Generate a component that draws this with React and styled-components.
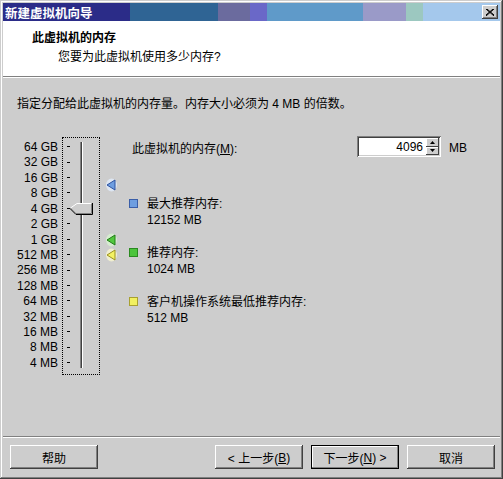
import React from 'react'
import styled, { createGlobalStyle } from 'styled-components'

const face = '#cdcdcd'
const shadow = '#808080'
const dark = '#404040'

const Global = createGlobalStyle`
  html, body { margin: 0; padding: 0; background: ${face}; }
  body {
    font-family: "Liberation Sans", "Noto Sans CJK SC", sans-serif;
    font-size: 12px;
    color: #000;
  }
  * { box-sizing: border-box; }
`

const Window = styled.div`
  width: 503px;
  height: 479px;
  padding: 3px;
  display: flex;
  flex-direction: column;
  background: ${face};
  box-shadow: inset -1px -1px ${dark}, inset 1px 1px ${face},
    inset -2px -2px ${shadow}, inset 2px 2px #fff;
`

const TitleBar = styled.div`
  height: 18px;
  display: flex;
  align-items: center;
  justify-content: space-between;
  padding: 0 2px 0 2px;
  background: linear-gradient(90deg,
    #2b2c88 0 127px, #2f6494 127px 215px, #6b6b9e 215px 247px,
    #6a68c8 247px 264px, #5f9ac9 264px 360px, #9a9ac8 360px 403px,
    #9cc8c0 403px 420px, #a4c8ec 420px);
`

const Title = styled.span`
  color: #fff;
  font-weight: bold;
  font-size: 12.5px;
`

const CloseBox = styled.div`
  width: 16px;
  height: 14px;
  background: ${face};
  display: flex;
  align-items: center;
  justify-content: center;
  box-shadow: inset -1px -1px ${dark}, inset 1px 1px #fff,
    inset -2px -2px ${shadow};
`

const Header = styled.div`
  height: 56px;
  background: #fff;
  padding: 10px 0 0 29px;
  border-bottom: 1px solid ${shadow};
`

const Heading = styled.div`
  font-weight: bold;
  line-height: 15px;
`

const Subtitle = styled.div`
  line-height: 15px;
  margin-top: 4px;
  padding-left: 26px;
`

const Rule = styled.div`
  height: 2px;
  border-top: 1px solid ${shadow};
  border-bottom: 1px solid #fff;
`

const HeaderEdge = styled.div`
  height: 1px;
  background: #fff;
`

const Body = styled.div`
  flex: 1;
  padding: 19px 0 0 14px;
`

const Instruction = styled.div`
  line-height: 15px;
`

const Content = styled.div`
  display: flex;
  align-items: flex-start;
  margin-top: 25px;
`

const Scale = styled.div`
  display: flex;
  gap: 4px;
`

const Labels = styled.div`
  width: 41px;
  padding-top: 3px;
  text-align: right;
  white-space: nowrap;
`

const Row = styled.div`
  height: 15.43px;
  line-height: 15.43px;
`

const SliderBox = styled.div`
  position: relative;
  width: 38px;
  height: 238px;
  border: 1px dotted #000;
  padding: 0 0 0 4px;
`

const Ticks = styled.div`
  padding-top: 1px;
`

const Tick = styled.div`
  height: 15.43px;
  display: flex;
  align-items: center;
  &::before {
    content: '';
    width: 3px;
    height: 1px;
    background: #000;
  }
`

const Track = styled.div`
  position: absolute;
  left: 17px;
  top: 4px;
  width: 3px;
  height: 226px;
  border-left: 1px solid ${shadow};
  border-right: 1px solid #fff;
  background: ${dark};
`

const Thumb = styled.svg`
  position: absolute;
  left: 7px;
  width: 23px;
  height: 12px;
`

const Marker = styled.svg`
  position: absolute;
  left: 42px;
  width: 12px;
  height: 14px;
`

const Details = styled.div`
  margin-left: 29px;
  margin-top: -1px;
  display: flex;
  flex-direction: column;
`

const MemoryRow = styled.div`
  display: flex;
  align-items: center;
  height: 21px;
`

const MemoryLabel = styled.span`
  width: 228px;
  padding-left: 3px;
  padding-top: 2px;
`

const Spin = styled.div`
  width: 84px;
  height: 21px;
  background: #fff;
  display: flex;
  align-items: stretch;
  padding: 2px;
  box-shadow: inset 1px 1px ${shadow}, inset -1px -1px #fff,
    inset 2px 2px ${dark}, inset -2px -2px ${face};
`

const SpinValue = styled.span`
  flex: 1;
  text-align: right;
  padding-right: 3px;
  line-height: 18px;
`

const SpinButtons = styled.div`
  width: 13px;
  display: flex;
  flex-direction: column;
`

const SpinButton = styled.div`
  flex: 1;
  background: ${face};
  display: flex;
  align-items: center;
  justify-content: center;
  box-shadow: inset -1px -1px ${dark}, inset 1px 1px #fff;
`

const Unit = styled.span`
  margin-left: 8px;
  padding-top: 2px;
`

const Legend = styled.div`
  display: flex;
  flex-direction: column;
  gap: 18px;
  margin-top: 40px;
`

const LegendItem = styled.div`
  display: flex;
  align-items: flex-start;
`

const Swatch = styled.span`
  width: 9px;
  height: 9px;
  margin: 2px 9px 0 0;
  border: 1px solid ${p => p.$edge};
  background: ${p => p.$fill};
`

const LegendText = styled.div`
  line-height: 15.5px;
`

const Footer = styled.div`
  display: flex;
  align-items: center;
  padding: 7px 5px 7px 7px;
`

const Spacer = styled.div`
  flex: 1;
`

const Button = styled.div`
  width: 88px;
  height: 24px;
  display: flex;
  align-items: center;
  justify-content: center;
  padding-top: 1px;
  margin-left: ${p => p.$gap || 0}px;
  background: ${face};
  box-shadow: ${p => p.$default
    ? `inset 0 0 0 1px #000, inset -2px -2px ${shadow}, inset 2px 2px #fff`
    : `inset -1px -1px ${dark}, inset 1px 1px #fff, inset -2px -2px ${shadow}`};
`

const Key = styled.span`
  text-decoration: underline;
`

const scale = ['64 GB', '32 GB', '16 GB', '8 GB', '4 GB', '2 GB', '1 GB', '512 MB',
  '256 MB', '128 MB', '64 MB', '32 MB', '16 MB', '8 MB', '4 MB']

const step = 15.43
const posOf = mb => 9 + Math.log2(65536 / mb) * step

const markers = [
  { mb: 12152, fill: '#6e9ee0', edge: '#2e52a0', glow: '#dde6f2' },
  { mb: 1024, fill: '#52c83e', edge: '#227a18', glow: '#d6ecd0' },
  { mb: 512, fill: '#f4f262', edge: '#9a9020', glow: '#f0eed0' },
]

const legend = [
  { title: '最大推荐内存:', value: '12152 MB', fill: '#6e9ee0', edge: '#3a5ea8' },
  { title: '推荐内存:', value: '1024 MB', fill: '#4cc43c', edge: '#2a8a20' },
  { title: '客户机操作系统最低推荐内存:', value: '512 MB', fill: '#f2f060', edge: '#a8a030' },
]

const App = () => {
  const value = 4096
  return (
    <>
      <Global />
      <Window>
        <TitleBar>
          <Title>新建虚拟机向导</Title>
          <CloseBox>
            <svg width="8" height="7" viewBox="0 0 8 7">
              <path d="M0 0 L8 7 M1 0 L8 6 M8 0 L0 7 M7 0 L0 6" stroke="#000" strokeWidth="1" />
            </svg>
          </CloseBox>
        </TitleBar>
        <Header>
          <Heading>此虚拟机的内存</Heading>
          <Subtitle>您要为此虚拟机使用多少内存?</Subtitle>
        </Header>
        <HeaderEdge />
        <Body>
          <Instruction>指定分配给此虚拟机的内存量。内存大小必须为 4 MB 的倍数。</Instruction>
          <Content>
            <Scale>
              <Labels>
                {scale.map(s => <Row key={s}>{s}</Row>)}
              </Labels>
              <SliderBox>
                <Ticks>
                  {scale.map(s => <Tick key={s} />)}
                </Ticks>
                <Track />
                <Thumb viewBox="0 0 23 12" style={{ top: posOf(value) - 6 }}>
                  <path d="M7 0.5 H21.5 V10.5 H6 L0.5 5 Z" fill={face} stroke="#fff" />
                  <path d="M21.5 0.5 V10.5 H6 L0.5 5" fill="none" stroke={shadow} />
                  <path d="M22.5 0 V11.5 H6 L0 5.5" fill="none" stroke="#000" />
                </Thumb>
                {markers.map(m => (
                  <Marker key={m.mb} viewBox="0 0 12 14" style={{ top: posOf(m.mb) - 7 }}>
                    <ellipse cx="6.5" cy="7" rx="5.5" ry="6.5" fill={m.glow} />
                    <path d="M10 2 V12 L2 7 Z" fill={m.fill} stroke={m.edge} strokeWidth="1" strokeLinejoin="round" />
                  </Marker>
                ))}
              </SliderBox>
            </Scale>
            <Details>
              <MemoryRow>
                <MemoryLabel>此虚拟机的内存(<Key>M</Key>):</MemoryLabel>
                <Spin>
                  <SpinValue>{value}</SpinValue>
                  <SpinButtons>
                    <SpinButton>
                      <svg width="5" height="3" viewBox="0 0 5 3"><path d="M2.5 0 L5 3 H0 Z" fill="#000" /></svg>
                    </SpinButton>
                    <SpinButton>
                      <svg width="5" height="3" viewBox="0 0 5 3"><path d="M0 0 H5 L2.5 3 Z" fill="#000" /></svg>
                    </SpinButton>
                  </SpinButtons>
                </Spin>
                <Unit>MB</Unit>
              </MemoryRow>
              <Legend>
                {legend.map(l => (
                  <LegendItem key={l.title}>
                    <Swatch $fill={l.fill} $edge={l.edge} />
                    <LegendText>
                      <div>{l.title}</div>
                      <div>{l.value}</div>
                    </LegendText>
                  </LegendItem>
                ))}
              </Legend>
            </Details>
          </Content>
        </Body>
        <Rule />
        <Footer>
          <Button>帮助</Button>
          <Spacer />
          <Button>&lt; 上一步(<Key>B</Key>)</Button>
          <Button $gap={8} $default>下一步(<Key>N</Key>) &gt;</Button>
          <Button $gap={8}>取消</Button>
        </Footer>
      </Window>
    </>
  )
}

export default App
